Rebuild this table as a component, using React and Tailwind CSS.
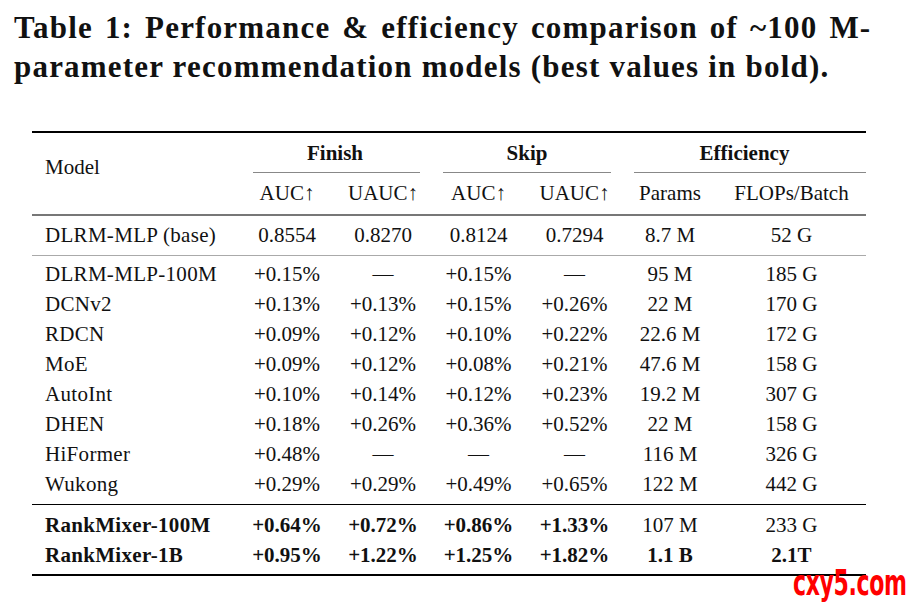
const rows = [
  ['DLRM-MLP-100M', '+0.15%', '—', '+0.15%', '—', '95 M', '185 G'],
  ['DCNv2', '+0.13%', '+0.13%', '+0.15%', '+0.26%', '22 M', '170 G'],
  ['RDCN', '+0.09%', '+0.12%', '+0.10%', '+0.22%', '22.6 M', '172 G'],
  ['MoE', '+0.09%', '+0.12%', '+0.08%', '+0.21%', '47.6 M', '158 G'],
  ['AutoInt', '+0.10%', '+0.14%', '+0.12%', '+0.23%', '19.2 M', '307 G'],
  ['DHEN', '+0.18%', '+0.26%', '+0.36%', '+0.52%', '22 M', '158 G'],
  ['HiFormer', '+0.48%', '—', '—', '—', '116 M', '326 G'],
  ['Wukong', '+0.29%', '+0.29%', '+0.49%', '+0.65%', '122 M', '442 G'],
]

const grid = 'grid grid-cols-[207px_96px_96px_95px_97px_94px_149px]'

function Row({ cells, bold = [], h = 'h-[30px]' }) {
  return (
    <div className={`${grid} ${h} items-center`}>
      {cells.map((c, i) => (
        <div
          key={i}
          className={`${i === 0 ? 'pl-[13px] text-left tracking-[0.3px]' : 'text-center'} ${bold[i] ? 'font-bold' : ''}`}
        >
          {c}
        </div>
      ))}
    </div>
  )
}

export default function App() {
  return (
    <div className="relative w-[911px] h-[606px] bg-white text-[#111] font-['Liberation_Serif',serif] overflow-hidden">
      {/* Caption */}
      <div className="pl-[14px] pt-[8px] text-[31px] font-bold leading-[39px] tracking-[1.2px] whitespace-nowrap">
        <div className="[word-spacing:3px]">Table 1: Performance &amp; efficiency comparison of ~100 M-</div>
        <div>parameter recommendation models (best values in bold).</div>
      </div>

      {/* Table */}
      <div className="ml-[32px] mt-[45px] w-[834px] text-[21px] leading-none">
        <div className="h-[2px] bg-black" />

        {/* header */}
        <div className={`${grid} grid-rows-[40px_41px]`}>
          <div className="row-span-2 flex items-center pl-[13px] pb-[12px]">Model</div>
          <div className="col-span-2 flex flex-col">
            <div className="flex-1 flex items-center justify-center font-bold pt-[2px]">Finish</div>
            <div className="h-px bg-[#888] ml-[14px] mr-[11px]" />
          </div>
          <div className="col-span-2 flex flex-col">
            <div className="flex-1 flex items-center justify-center font-bold pt-[2px]">Skip</div>
            <div className="h-px bg-[#888] ml-[12px] mr-[12px]" />
          </div>
          <div className="col-span-2 flex flex-col">
            <div className="flex-1 flex items-center justify-center font-bold pt-[2px]">Efficiency</div>
            <div className="h-px bg-[#888] ml-[11px]" />
          </div>
          <div className="col-start-2 flex items-center justify-center">AUC↑</div>
          <div className="flex items-center justify-center">UAUC↑</div>
          <div className="flex items-center justify-center">AUC↑</div>
          <div className="flex items-center justify-center">UAUC↑</div>
          <div className="flex items-center justify-center">Params</div>
          <div className="flex items-center justify-center">FLOPs/Batch</div>
        </div>

        <div className="h-[2px] bg-[#777]" />
        <Row cells={['DLRM-MLP (base)', '0.8554', '0.8270', '0.8124', '0.7294', '8.7 M', '52 G']} h="h-[39px]" />
        <div className="h-px bg-[#aaa]" />

        <div className="pt-[3px] pb-[5px]">
          {rows.map((r) => (
            <Row key={r[0]} cells={r} />
          ))}
        </div>

        <div className="h-px bg-black" />
        <div className="pt-[5px] pb-[4px]">
          <Row
            cells={['RankMixer-100M', '+0.64%', '+0.72%', '+0.86%', '+1.33%', '107 M', '233 G']}
            bold={[true, true, true, true, true, false, false]}
          />
          <Row
            cells={['RankMixer-1B', '+0.95%', '+1.22%', '+1.25%', '+1.82%', '1.1 B', '2.1T']}
            bold={[true, true, true, true, true, true, true]}
          />
        </div>
        <div className="h-[2px] bg-black" />
      </div>

      {/* watermark */}
      <div className="absolute left-[793px] top-[566px] text-[35px] font-bold text-[#ff0000] font-['DejaVu_Sans_Condensed','DejaVu_Sans',sans-serif] tracking-[-0.5px] origin-left scale-x-[0.7] leading-none whitespace-nowrap">
        cxy5.com
      </div>
    </div>
  )
}
